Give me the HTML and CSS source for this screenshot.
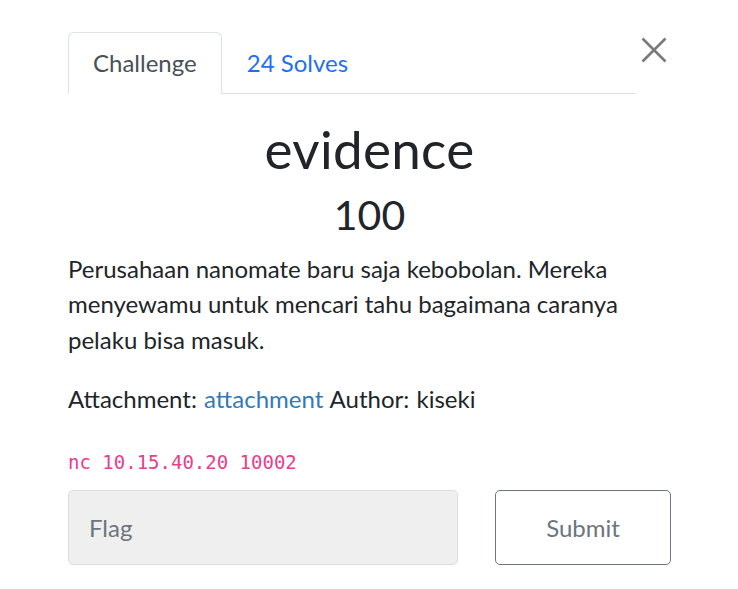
FILE: index.html
```html
<!DOCTYPE html>
<html lang="id">
<head>
<meta charset="utf-8">
<title>evidence</title>
<link rel="stylesheet" href="styles.css">
</head>
<body>
<div class="modal">
  <div class="head">
    <ul class="tabs">
      <li class="tab active">Challenge</li>
      <li class="tab">24 Solves</li>
    </ul>
    <button class="close" aria-label="Close">
      <svg width="26" height="26" viewBox="0 0 26 26"><path d="M1.5 1.5 L24.5 24.5 M24.5 1.5 L1.5 24.5" stroke="#7a7a7a" stroke-width="2.6" fill="none"/></svg>
    </button>
  </div>
  <h2 class="name">evidence</h2>
  <h3 class="value">100</h3>
  <p class="desc">Perusahaan nanomate baru saja kebobolan. Mereka menyewamu untuk mencari tahu bagaimana caranya pelaku bisa masuk.</p>
  <p class="meta">Attachment: <a href="#" class="link">attachment</a> Author: kiseki</p>
  <p class="cmd"><code>nc 10.15.40.20 10002</code></p>
  <form class="flag-row">
    <input class="flag-input" type="text" placeholder="Flag">
    <button class="submit" type="button">Submit</button>
  </form>
</div>
</body>
</html>
```
FILE: styles.css
```css
* { box-sizing: border-box; }
html, body { margin: 0; padding: 0; background: #fff; }
body {
  font-family: Lato, "Open Sans", sans-serif;
  color: #212529;
  font-size: 24px;
  line-height: 1.5;
}
.modal {
  width: 603px;
  margin-left: 68px;
  padding-top: 32px;
}
.head {
  display: flex;
  align-items: flex-start;
}
.tabs {
  list-style: none;
  margin: 0;
  padding: 0;
  display: flex;
  flex: 1;
  border-bottom: 1px solid #dee2e6;
}
.tab {
  padding: 12px 24px;
  border: 1px solid transparent;
  border-top-left-radius: 6px;
  border-top-right-radius: 6px;
  margin-bottom: -1px;
  color: #1f6ff0;
  line-height: 36px;
}
.tab.active {
  color: #495057;
  border-color: #dee2e6 #dee2e6 #fff;
  background: #fff;
}
.close {
  width: 35px;
  margin: 5px 0 0 0;
  padding: 0;
  border: 0;
  background: none;
  display: flex;
  justify-content: center;
}
.name {
  margin: 23px 0 9px;
  text-align: center;
  font-size: 53px;
  font-weight: 400;
  line-height: 1.2;
  letter-spacing: 0.3px;
}
.value {
  margin: 0 0 12px;
  text-align: center;
  font-size: 41px;
  font-weight: 400;
  line-height: 1.2;
}
.desc {
  margin: 0 0 24px;
  font-size: 24px;
  line-height: 35.5px;
}
.meta {
  margin: 0 0 28px;
  font-size: 24px;
  line-height: 35.5px;
  word-spacing: 1px;
}
.link { color: #337ab7; text-decoration: none; }
.cmd { margin: 0 0 13px; line-height: 30px; }
.cmd code {
  font-family: "DejaVu Sans Mono", monospace;
  font-size: 19px;
  color: #e83e8c;
}
.flag-row {
  display: flex;
  gap: 37px;
}
.flag-input {
  width: 390px;
  height: 75px;
  background: #efefef;
  border: 1px solid #dcdcdc;
  border-radius: 5px;
  padding: 0 20px;
  font-family: Lato, sans-serif;
  font-size: 24px;
  color: #495057;
}
.flag-input::placeholder { color: #6c757d; opacity: 1; }
.submit {
  width: 176px;
  height: 75px;
  background: #fff;
  border: 1px solid #6c757d;
  border-radius: 5px;
  font-family: Lato, sans-serif;
  font-size: 24px;
  color: #6c757d;
}
```
